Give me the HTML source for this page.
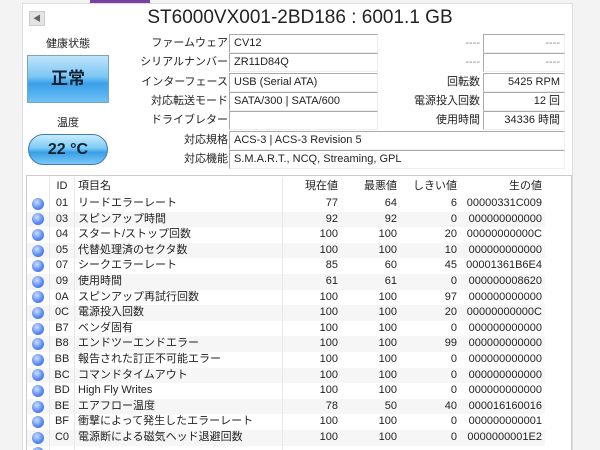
<!DOCTYPE html><html><head><meta charset="utf-8"><style>
*{margin:0;padding:0;box-sizing:border-box}
html{overflow:hidden}
body{width:600px;height:450px;overflow:hidden;background:#f3f3f3;font-family:"Liberation Sans","Noto Sans CJK JP",sans-serif;font-size:11px;line-height:16px;color:#222;position:relative}
.panel{position:absolute;left:22px;top:3px;width:551px;height:447px;background:#fff;border-left:1px solid #ddd;border-right:1px solid #ddd;border-top:1px solid #ddd}
.tab{position:absolute;left:90px;top:0;width:60px;height:3px;background:#7b3fa0}
.abs{position:absolute}
.lbl{position:absolute;text-align:right;white-space:nowrap;line-height:19px;height:19px}
.box{position:absolute;border-top:1px solid #aaa;border-left:1px solid #aaa;border-bottom:1px solid #eee;border-right:1px solid #eee;height:19px;line-height:17px;padding:0 4px;white-space:nowrap}
.tbl{position:absolute;left:27px;top:177px;width:518px;height:273px;overflow:hidden}
.row{display:flex;height:15.6px;overflow:hidden}
.row:nth-child(odd){background:#f6f6f6}
.row.h{background:#fff;height:19px}
.row>div{line-height:15.6px;padding:0 3px;white-space:nowrap;overflow:hidden;flex:none}
.row.h>div{line-height:19px}
.c1{width:22px;display:flex;align-items:center;justify-content:center}
.c2{width:26px;text-align:center;border-left:1px solid #e8e8e8;border-right:1px solid #e8e8e8}
.c3{width:208px;border-right:1px solid #e8e8e8}
.c4{width:58px;text-align:right}.c5{width:59px;text-align:right}.c6{width:60px;text-align:right}.c7{width:85px;text-align:right}
.dot{width:12px;height:12px;border-radius:50%;background:radial-gradient(circle at 40% 35%,#cfe0ff,#5c8cf0 55%,#2f5fd0)}
</style></head><body>
<div class="panel"></div><div class="tab"></div>
<div class="abs" style="left:29px;top:11px;width:16px;height:15px;background:#e4e4e4;border:1px solid #ccc;font-size:8px;color:#666;text-align:center;line-height:13px">◀</div>
<div class="abs" style="left:50px;top:6px;width:500px;text-align:center;font-size:19px;line-height:24px;color:#222;white-space:nowrap">ST6000VX001-2BD186 : 6001.1 GB</div>
<div class="abs" style="left:27px;top:36px;width:82px;text-align:center">健康状態</div>
<div class="abs" style="left:27px;top:55px;width:82px;height:48px;border:1px solid #7aa;background:linear-gradient(#bfe4fb,#7cc6f4 45%,#3aa0ea 60%,#6fc0f4);text-align:center;line-height:46px;font-size:17px;font-weight:bold;color:#123">正常</div>
<div class="abs" style="left:27px;top:115px;width:82px;text-align:center">温度</div>
<div class="abs" style="left:28px;top:134px;width:80px;height:31px;border:1px solid #3c7cc0;border-radius:16px;background:linear-gradient(#c9ecfc,#7ccaf5 45%,#3a9fe6 60%,#7ac8f5);text-align:center;line-height:29px;font-size:16px;font-weight:bold;color:#123">22 °C</div>

<div class="lbl" style="right:372px;top:34px">ファームウェア</div><div class="box" style="left:229px;top:34px;width:149px">CV12</div>
<div class="lbl" style="right:372px;top:53px">シリアルナンバー</div><div class="box" style="left:229px;top:53px;width:149px">ZR11D84Q</div>
<div class="lbl" style="right:372px;top:73px">インターフェース</div><div class="box" style="left:229px;top:73px;width:149px">USB (Serial ATA)</div>
<div class="lbl" style="right:372px;top:92px">対応転送モード</div><div class="box" style="left:229px;top:92px;width:149px">SATA/300 | SATA/600</div>
<div class="lbl" style="right:372px;top:111px">ドライブレター</div><div class="box" style="left:229px;top:111px;width:149px"></div>
<div class="lbl" style="right:372px;top:131px">対応規格</div><div class="box" style="left:229px;top:131px;width:336px">ACS-3 | ACS-3 Revision 5</div>
<div class="lbl" style="right:372px;top:150px">対応機能</div><div class="box" style="left:229px;top:150px;width:336px">S.M.A.R.T., NCQ, Streaming, GPL</div>

<div class="lbl" style="right:120px;top:34px;color:#888">----</div><div class="box" style="left:483px;top:34px;width:82px;color:#888;text-align:right">----</div>
<div class="lbl" style="right:120px;top:53px;color:#888">----</div><div class="box" style="left:483px;top:53px;width:82px;color:#888;text-align:right">----</div>
<div class="lbl" style="right:120px;top:73px">回転数</div><div class="box" style="left:483px;top:73px;width:82px;text-align:right">5425 RPM</div>
<div class="lbl" style="right:120px;top:92px">電源投入回数</div><div class="box" style="left:483px;top:92px;width:82px;text-align:right">12 回</div>
<div class="lbl" style="right:120px;top:111px">使用時間</div><div class="box" style="left:483px;top:111px;width:82px;text-align:right">34336 時間</div>

<div class="abs" style="left:26px;top:175px;width:546px;height:275px;border:1px solid #ccc;border-bottom:none"></div>
<div class="tbl">
<div class="row h"><div class="c1"></div><div class="c2">ID</div><div class="c3">項目名</div><div class="c4">現在値</div><div class="c5">最悪値</div><div class="c6">しきい値</div><div class="c7">生の値</div></div>
<div class="row"><div class="c1"><div class="dot"></div></div><div class="c2">01</div><div class="c3">リードエラーレート</div><div class="c4">77</div><div class="c5">64</div><div class="c6">6</div><div class="c7">00000331C009</div></div>
<div class="row"><div class="c1"><div class="dot"></div></div><div class="c2">03</div><div class="c3">スピンアップ時間</div><div class="c4">92</div><div class="c5">92</div><div class="c6">0</div><div class="c7">000000000000</div></div>
<div class="row"><div class="c1"><div class="dot"></div></div><div class="c2">04</div><div class="c3">スタート/ストップ回数</div><div class="c4">100</div><div class="c5">100</div><div class="c6">20</div><div class="c7">00000000000C</div></div>
<div class="row"><div class="c1"><div class="dot"></div></div><div class="c2">05</div><div class="c3">代替処理済のセクタ数</div><div class="c4">100</div><div class="c5">100</div><div class="c6">10</div><div class="c7">000000000000</div></div>
<div class="row"><div class="c1"><div class="dot"></div></div><div class="c2">07</div><div class="c3">シークエラーレート</div><div class="c4">85</div><div class="c5">60</div><div class="c6">45</div><div class="c7">00001361B6E4</div></div>
<div class="row"><div class="c1"><div class="dot"></div></div><div class="c2">09</div><div class="c3">使用時間</div><div class="c4">61</div><div class="c5">61</div><div class="c6">0</div><div class="c7">000000008620</div></div>
<div class="row"><div class="c1"><div class="dot"></div></div><div class="c2">0A</div><div class="c3">スピンアップ再試行回数</div><div class="c4">100</div><div class="c5">100</div><div class="c6">97</div><div class="c7">000000000000</div></div>
<div class="row"><div class="c1"><div class="dot"></div></div><div class="c2">0C</div><div class="c3">電源投入回数</div><div class="c4">100</div><div class="c5">100</div><div class="c6">20</div><div class="c7">00000000000C</div></div>
<div class="row"><div class="c1"><div class="dot"></div></div><div class="c2">B7</div><div class="c3">ベンダ固有</div><div class="c4">100</div><div class="c5">100</div><div class="c6">0</div><div class="c7">000000000000</div></div>
<div class="row"><div class="c1"><div class="dot"></div></div><div class="c2">B8</div><div class="c3">エンドツーエンドエラー</div><div class="c4">100</div><div class="c5">100</div><div class="c6">99</div><div class="c7">000000000000</div></div>
<div class="row"><div class="c1"><div class="dot"></div></div><div class="c2">BB</div><div class="c3">報告された訂正不可能エラー</div><div class="c4">100</div><div class="c5">100</div><div class="c6">0</div><div class="c7">000000000000</div></div>
<div class="row"><div class="c1"><div class="dot"></div></div><div class="c2">BC</div><div class="c3">コマンドタイムアウト</div><div class="c4">100</div><div class="c5">100</div><div class="c6">0</div><div class="c7">000000000000</div></div>
<div class="row"><div class="c1"><div class="dot"></div></div><div class="c2">BD</div><div class="c3">High Fly Writes</div><div class="c4">100</div><div class="c5">100</div><div class="c6">0</div><div class="c7">000000000000</div></div>
<div class="row"><div class="c1"><div class="dot"></div></div><div class="c2">BE</div><div class="c3">エアフロー温度</div><div class="c4">78</div><div class="c5">50</div><div class="c6">40</div><div class="c7">000016160016</div></div>
<div class="row"><div class="c1"><div class="dot"></div></div><div class="c2">BF</div><div class="c3">衝撃によって発生したエラーレート</div><div class="c4">100</div><div class="c5">100</div><div class="c6">0</div><div class="c7">000000000001</div></div>
<div class="row"><div class="c1"><div class="dot"></div></div><div class="c2">C0</div><div class="c3">電源断による磁気ヘッド退避回数</div><div class="c4">100</div><div class="c5">100</div><div class="c6">0</div><div class="c7">0000000001E2</div></div>
<div class="row"><div class="c1"><div class="dot"></div></div><div class="c2"></div><div class="c3"></div></div>
</div>
</body></html>
